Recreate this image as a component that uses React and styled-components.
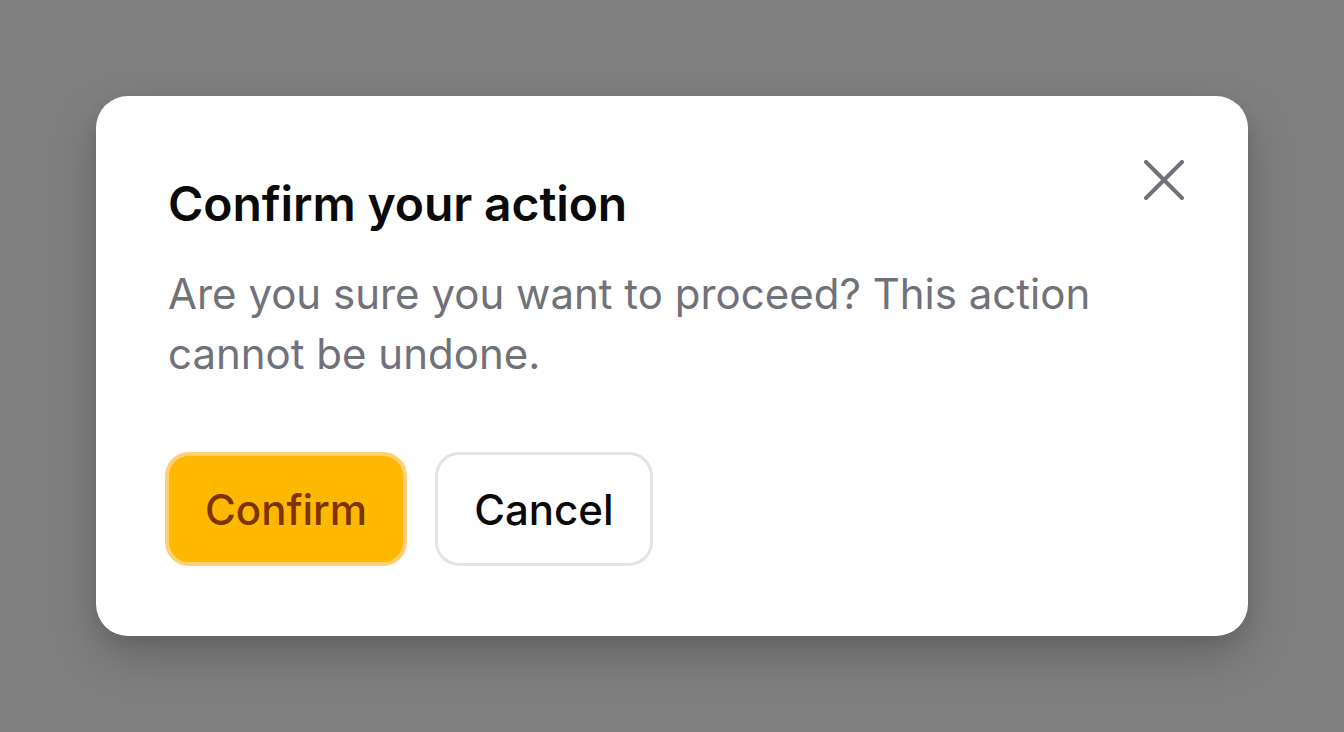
import React from "react";
import styled, { createGlobalStyle } from "styled-components";

const Global = createGlobalStyle`
  html, body { margin: 0; padding: 0; }
  body {
    background: #808080;
    font-family: Inter, "Noto Sans", sans-serif;
    -webkit-font-smoothing: antialiased;
  }
`;

const Overlay = styled.div`
  width: 1344px;
  height: 732px;
  box-sizing: border-box;
  padding-top: 96px;
  display: flex;
  justify-content: center;
  align-items: flex-start;
  background: #808080;
`;

const Dialog = styled.div`
  position: relative;
  width: 1152px;
  height: 540px;
  box-sizing: border-box;
  padding: 72px 72px 0 72px;
  background: #ffffff;
  border-radius: 32px;
  box-shadow: 0 20px 50px rgba(0, 0, 0, 0.22), 0 6px 16px rgba(0, 0, 0, 0.08);
  display: flex;
  flex-direction: column;
`;

const Title = styled.h2`
  margin: 0;
  font-size: 48px;
  line-height: 72px;
  font-weight: 600;
  color: #0a0a0a;
  letter-spacing: -0.1px;
`;

const Body = styled.p`
  margin: 24px 0 0 0;
  width: 980px;
  font-size: 42px;
  line-height: 60px;
  font-weight: 400;
  color: #71717a;
`;

const Actions = styled.div`
  margin-top: 68px;
  display: flex;
  gap: 28px;
  margin-left: -3px;
`;

const Button = styled.button`
  height: 114px;
  box-sizing: border-box;
  padding: 0 36px;
  border-radius: 24px;
  font-family: Inter, "Noto Sans", sans-serif;
  font-size: 42px;
  font-weight: 500;
  cursor: pointer;
  border: ${(p) => (p.$primary ? "4px solid #ffcf78" : "3px solid #e4e4e7")};
  background: ${(p) => (p.$primary ? "#ffb800" : "#ffffff")};
  color: ${(p) => (p.$primary ? "#7c3306" : "#0a0a0a")};
`;

const Close = styled.button`
  position: absolute;
  right: 56px;
  top: 56px;
  width: 56px;
  height: 56px;
  padding: 0;
  border: none;
  background: transparent;
  display: flex;
  align-items: center;
  justify-content: center;
  cursor: pointer;
`;

export default function App() {
  return (
    <>
      <Global />
      <Overlay>
        <Dialog role="dialog">
          <Title>Confirm your action</Title>
          <Body>
            Are you sure you want to proceed? This action cannot be undone.
          </Body>
          <Actions>
            <Button $primary>Confirm</Button>
            <Button>Cancel</Button>
          </Actions>
          <Close aria-label="Close">
            <svg width="40" height="40" viewBox="0 0 40 40" fill="none">
              <path
                d="M2 2 L38 38 M38 2 L2 38"
                stroke="#71717a"
                strokeWidth="4"
                strokeLinecap="round"
              />
            </svg>
          </Close>
        </Dialog>
      </Overlay>
    </>
  );
}
